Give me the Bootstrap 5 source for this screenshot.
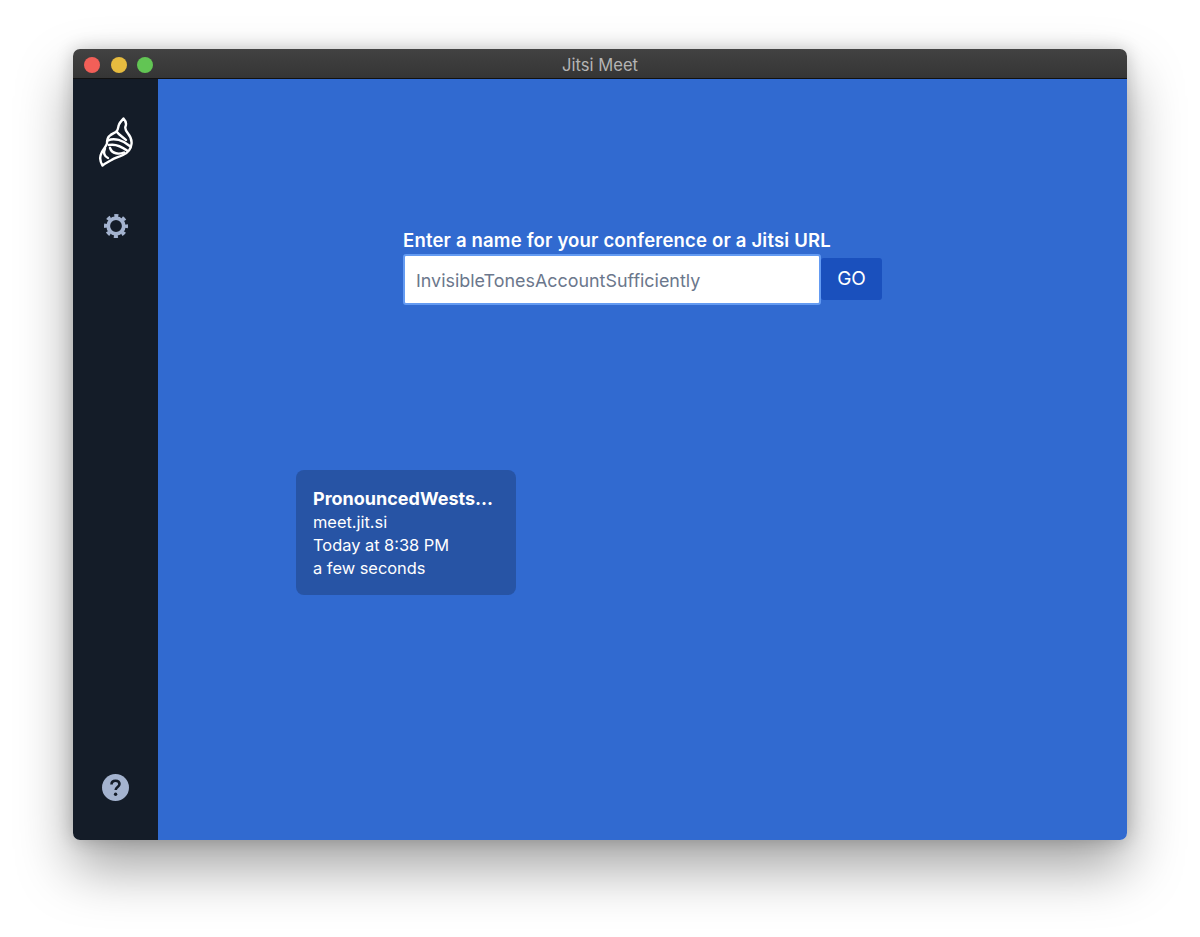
<!DOCTYPE html>
<html lang="en">
<head>
    <meta charset="UTF-8">
    <title>Jitsi Meet</title>
    <link href="https://cdn.jsdelivr.net/npm/bootstrap@5.3.0/dist/css/bootstrap.min.css" rel="stylesheet">
    <style>
        html, body { height: 100%; }
        body {
            background: #fff;
            padding: 49px 73px 97px;
            font-family: Inter, "Liberation Sans", sans-serif;
            overflow: hidden;
        }
        .app-window {
            height: 791px;
            border-radius: 7px;
            overflow: hidden;
            box-shadow: 0 28px 55px rgba(0, 0, 0, .36), 0 0 18px rgba(0, 0, 0, .2);
        }
        .title-bar {
            height: 30px;
            padding-top: 3px;
            background: linear-gradient(#424242, #353535);
            border-bottom: 1px solid #111;
            color: #b4b4b4;
            font-size: 16.6px;
        }
        .traffic { left: 11px; top: 8px; gap: 10.500px; }
        .traffic span { width: 16px; height: 16px; border-radius: 50%; }
        .sidebar {
            width: 85px;
            background: #141c28;
            padding: 38px 0 39px;
        }
        .main-area { background: #316ad0; }
        .enter-room { margin: 151px 0 0 245px; width: 480px; }
        .enter-room label {
            font-size: 18.5px;
            font-weight: 600;
            letter-spacing: .18px;
            line-height: 20px;
            margin-bottom: 4px;
            color: #fff;
        }
        .room-input {
            width: 418px;
            height: 51px;
            border: 2px solid #649bf2;
            border-radius: 3px;
            padding: 2px 11px 0;
            font-size: 17.9px;
            color: #6b778c;
        }
        .btn-go {
            width: 61px;
            height: 42px;
            margin-bottom: 1px;
            background: #1a50bd;
            color: #fff;
            font-size: 19px;
            border: 0;
            border-radius: 3px;
            padding: 0;
        }
        .btn-go:hover { background: #1a50bd; color: #fff; }
        .recent-card {
            width: 220px;
            height: 125px;
            margin: 165px 0 0 138px;
            padding: 17px;
            background: #2754a5;
            border-radius: 8px;
            color: #fff;
            font-size: 16.4px;
            line-height: 23px;
        }
        .recent-card .room-name { font-size: 18px; font-weight: 700; line-height: 24px; }
        .gear { margin-top: 47px; }
    </style>
</head>
<body>
<div class="app-window d-flex flex-column">
    <div class="title-bar position-relative d-flex align-items-center justify-content-center">
        <div class="traffic position-absolute d-flex">
            <span class="d-block" style="background:#f25f58"></span>
            <span class="d-block" style="background:#e6bb3f"></span>
            <span class="d-block" style="background:#62c554"></span>
        </div>
        Jitsi Meet
    </div>
    <div class="d-flex flex-grow-1">
        <div class="sidebar d-flex flex-column align-items-center">
            <!-- logo -->
            <svg width="34" height="50" viewBox="0 0 34 50" fill="none" stroke="#fff" stroke-width="2.400" stroke-linejoin="round" stroke-linecap="round">
                <path d="M24.500 1.500C27 4 27.500 7 26.500 9.500C25.500 12 27 14 29 16.500C31.500 19.500 33 23 32.500 27C32 32 28.500 36 24 38C20 40 15.500 41 12.500 43C9 45 6 46.500 3.500 48.500C1 44.500 .5 40 2.500 36C4 32 7 30 8 26.500C8 23.500 8.500 20.500 10.500 19C12.500 17 15.500 16 17.500 14.500C19.500 12.500 19 9.500 20 7.500C21 5 23 3.500 24.500 1.500Z"/>
                <path d="M17.500 14.500C20 18 24 20 27 23"/>
                <path d="M9 23.500C15 20.500 24 23 31.500 29.500"/>
                <path d="M10 28C15 27 22 29 28 33.500"/>
                <path d="M11 31C13 37 20 37.500 25 35.500"/>
                <path d="M6 31.500C4 36 5.500 39.500 9 41"/>
            </svg>
            <!-- settings -->
            <svg class="gear" width="24" height="24" viewBox="0 0 24 24" fill="none" stroke="#a4b3cf">
                <circle cx="12" cy="12" r="7.800" stroke-width="3.800"/>
                <circle cx="12" cy="12" r="10.500" stroke-width="3" stroke-dasharray="4.100 4.147" stroke-dashoffset="2.050"/>
            </svg>
            <!-- help -->
            <svg class="mt-auto" width="27" height="27" viewBox="0 0 27 27">
                <circle cx="13.500" cy="13.500" r="13.500" fill="#a4b3cf"/>
                <path d="M9.500 10.500c0-2.500 1.800-3.800 4-3.800s4 1.300 4 3.400c0 3-3.800 3-3.800 6" fill="none" stroke="#141c28" stroke-width="2.600"/>
                <circle cx="13.600" cy="20.300" r="1.700" fill="#141c28"/>
            </svg>
        </div>
        <div class="main-area flex-grow-1 d-flex flex-column">
            <form class="enter-room">
                <label class="d-block" for="roomName">Enter a name for your conference or a Jitsi URL</label>
                <div class="d-flex align-items-center">
                    <input class="room-input" id="roomName" type="text" value="InvisibleTonesAccountSufficiently">
                    <button type="button" class="btn btn-go">GO</button>
                </div>
            </form>
            <div class="recent-card">
                <div class="room-name text-truncate">PronouncedWests...</div>
                <div>meet.jit.si</div>
                <div>Today at 8:38 PM</div>
                <div>a few seconds</div>
            </div>
        </div>
    </div>
</div>
</body>
</html>
